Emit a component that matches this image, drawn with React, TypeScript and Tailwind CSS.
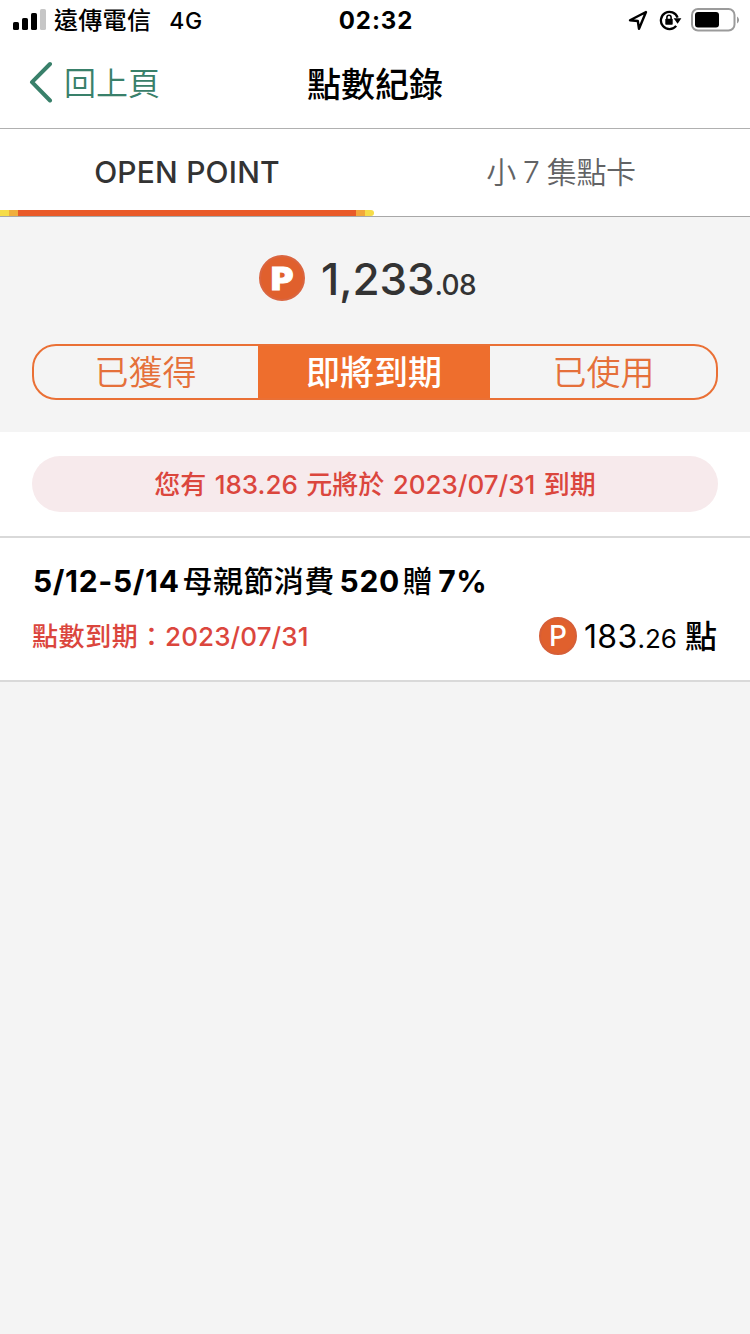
import React from 'react';

interface PointRecord {
    id: number;
    title: React.ReactNode;
    expireDate: string;
    amount: string;
    decimals: string;
}

const records: PointRecord[] = [
    {
        id: 1,
        title: (
            <>
                5/12-5/14<Cjk>母親節消費</Cjk>520<Cjk>贈</Cjk>7%
            </>
        ),
        expireDate: '2023/07/31',
        amount: '183',
        decimals: '.26',
    },
];

function Cjk({ children }: { children: React.ReactNode }) {
    return <span className="mr-[5px] ml-[3px] font-medium tracking-[0.4px]">{children}</span>;
}

const StatusBar: React.FC = () => (
    <div className="flex h-10 items-center text-black">
        <div className="flex flex-1 items-center pl-[13px]">
            <svg width="33" height="22" viewBox="0 0 33 22">
                <rect x="0" y="13" width="6" height="8" rx="1.6" />
                <rect x="9" y="9" width="6" height="12" rx="1.6" />
                <rect x="18" y="4" width="6" height="17" rx="1.6" />
                <rect x="27" y="0" width="6" height="21" rx="1.6" fill="#c6c6c6" />
            </svg>
            <span className="ml-2 pt-0.5 text-2xl leading-10 font-medium tracking-[0.3px]">遠傳電信</span>
            <span className="ml-[18px] pt-0.5 text-[23px] leading-10 font-medium tracking-[0.8px]">4G</span>
        </div>
        <span className="pt-0.5 text-2xl leading-10 font-bold tracking-[0.9px]">02:32</span>
        <div className="flex flex-1 items-center justify-end pr-[11px]">
            <svg width="20" height="21" viewBox="0 0 20 21" fill="none" stroke="currentColor" strokeWidth="2.4" strokeLinejoin="round">
                <path d="M18 2 L2 10.2 L9.8 11 L11 18.7 Z" />
            </svg>
            <svg className="ml-3 -translate-x-px" width="23" height="21" viewBox="0 0 23 21" fill="none" stroke="currentColor">
                <path d="M17.2 15.9 A8.6 8.6 0 1 1 18.6 7.6" strokeWidth="2.3" />
                <path d="M14.6 8.3 H22.4 L18.6 13.8 Z" fill="currentColor" stroke="none" />
                <rect x="6.3" y="8.8" width="7.4" height="6" rx="0.8" fill="currentColor" stroke="none" />
                <path d="M7.9 9 V7.4 a2.1 2.1 0 0 1 4.2 0 V9" strokeWidth="1.6" />
            </svg>
            <svg className="ml-2" width="48" height="24" viewBox="0 0 48 24">
                <rect x="1" y="1" width="42.5" height="21.5" rx="6" fill="none" stroke="#9b9b9b" strokeWidth="2" />
                <rect x="4" y="4" width="24" height="15.5" rx="3" />
                <path d="M46 8.5 a4 4 0 0 1 0 7 Z" fill="#9b9b9b" />
            </svg>
        </div>
    </div>
);

const Header: React.FC = () => (
    <header className="grid h-[89px] grid-cols-[1fr_auto_1fr] items-center border-b border-[#b0b0b0]">
        <button className="flex items-center pl-7 text-[#39806a]">
            <svg className="mb-1" width="26" height="42" viewBox="0 0 26 42" fill="none" stroke="currentColor" strokeWidth="4" strokeLinecap="round" strokeLinejoin="round">
                <path d="M22 3 L4 21.2 L22 39.5" />
            </svg>
            <span className="ml-[10px] text-[32px] leading-none font-[350]">回上頁</span>
        </button>
        <h1 className="pt-0.5 text-[34px] leading-none font-medium text-black">點數紀錄</h1>
        <div />
    </header>
);

const Tabs: React.FC = () => (
    <div className="flex h-[88px] border-b border-[#a8a8a8] text-[30px]">
        <div className="flex w-[374px] flex-col">
            <div className="flex flex-1 items-center justify-center pt-1.5 font-medium tracking-[0.2px] text-[#333]">OPEN POINT</div>
            <div className="flex h-1.5 overflow-hidden rounded-r-sm">
                <span className="w-[9px] bg-[#f6dc48]" />
                <span className="w-[9px] bg-[#f0ae3c]" />
                <span className="flex-1 bg-[#e95a29]" />
                <span className="w-[9px] bg-[#f3a63b]" />
                <span className="w-[9px] bg-[#f6dc48]" />
            </div>
        </div>
        <div className="flex flex-1 items-center justify-center pr-0.5 font-[350] tracking-[-0.3px] [word-spacing:-1px] text-[#626365]">小 7 集點卡</div>
    </div>
);

const segments = ['已獲得', '即將到期', '已使用'];

const Summary: React.FC = () => (
    <section className="flex h-[215px] flex-col bg-[#f4f4f4] px-8 pt-[38px]">
        <div className="flex h-[46px] items-center pl-[227px] text-[#333]">
            <div className="flex size-[46px] items-center justify-center rounded-full border-2 border-[#da6540] bg-[#e0602d] text-[31px] leading-none font-black text-white">
                <span className="scale-x-110 [-webkit-text-stroke:1px_white]">P</span>
            </div>
            <p className="ml-4 flex items-baseline pt-px leading-none font-medium">
                <span className="text-[44px] tracking-[-0.1px]">1,233</span>
                <span className="text-[28px] tracking-[-0.6px]">.08</span>
            </p>
        </div>
        <div className="mt-[43px] flex h-14 overflow-hidden rounded-3xl border-2 border-[#ea7035] text-[34px] leading-none text-[#e5703a]">
            {segments.map((label, i) =>
                i === 1 ? (
                    <div key={label} className="flex w-[232px] items-center justify-center bg-[#ee6e2d] pt-0.5 font-medium text-white">{label}</div>
                ) : (
                    <div key={label} className="flex w-[224px] items-center justify-center pt-0.5 pr-px font-[350] last:flex-1 last:pr-0 last:pl-px">{label}</div>
                ),
            )}
        </div>
    </section>
);

const RecordRow: React.FC<{ record: PointRecord }> = ({ record }) => (
    <li className="h-[146px] border-y-2 border-[#d9d9d9] bg-white px-8 pt-[23px]">
        <h2 className="pl-px text-[30px] leading-10 font-bold tracking-[0.65px] whitespace-nowrap text-black">{record.title}</h2>
        <div className="mt-[11px] flex h-12 items-center justify-between pr-px">
            <p className="text-[26px] font-medium tracking-[0.1px] text-[#db463d]">
                <span className="tracking-[0.6px]">點數到期：</span>
                {record.expireDate}
            </p>
            <div className="flex items-center text-black">
                <div className="flex size-[38px] items-center justify-center rounded-full border-2 border-[#d65f38] bg-[#e0602d] text-[28px] leading-none font-medium text-white">P</div>
                <p className="ml-[7px] flex items-baseline pt-1 leading-10">
                    <span className="text-[32px] tracking-[0.3px]">{record.amount}</span>
                    <span className="text-[26px]">{record.decimals}</span>
                    <span className="ml-2 text-[32px] font-medium">點</span>
                </p>
            </div>
        </div>
    </li>
);

export default function App() {
    return (
        <div lang="zh-Hant" className="min-h-[1334px] w-[750px] bg-[#f4f4f4] font-['Inter','Noto_Sans_CJK_TC',sans-serif]">
            <div className="bg-white">
                <StatusBar />
                <Header />
                <Tabs />
            </div>
            <Summary />
            <div className="bg-white px-8 py-6">
                <p className="flex h-14 items-center justify-center rounded-full bg-[#f7eaec] pt-px text-[26px] font-medium [word-spacing:1.5px] text-[#db463d]">
                    您有 183.26 元將於 2023/07/31 到期
                </p>
            </div>
            <ul>
                {records.map(r => (
                    <RecordRow key={r.id} record={r} />
                ))}
            </ul>
        </div>
    );
}
